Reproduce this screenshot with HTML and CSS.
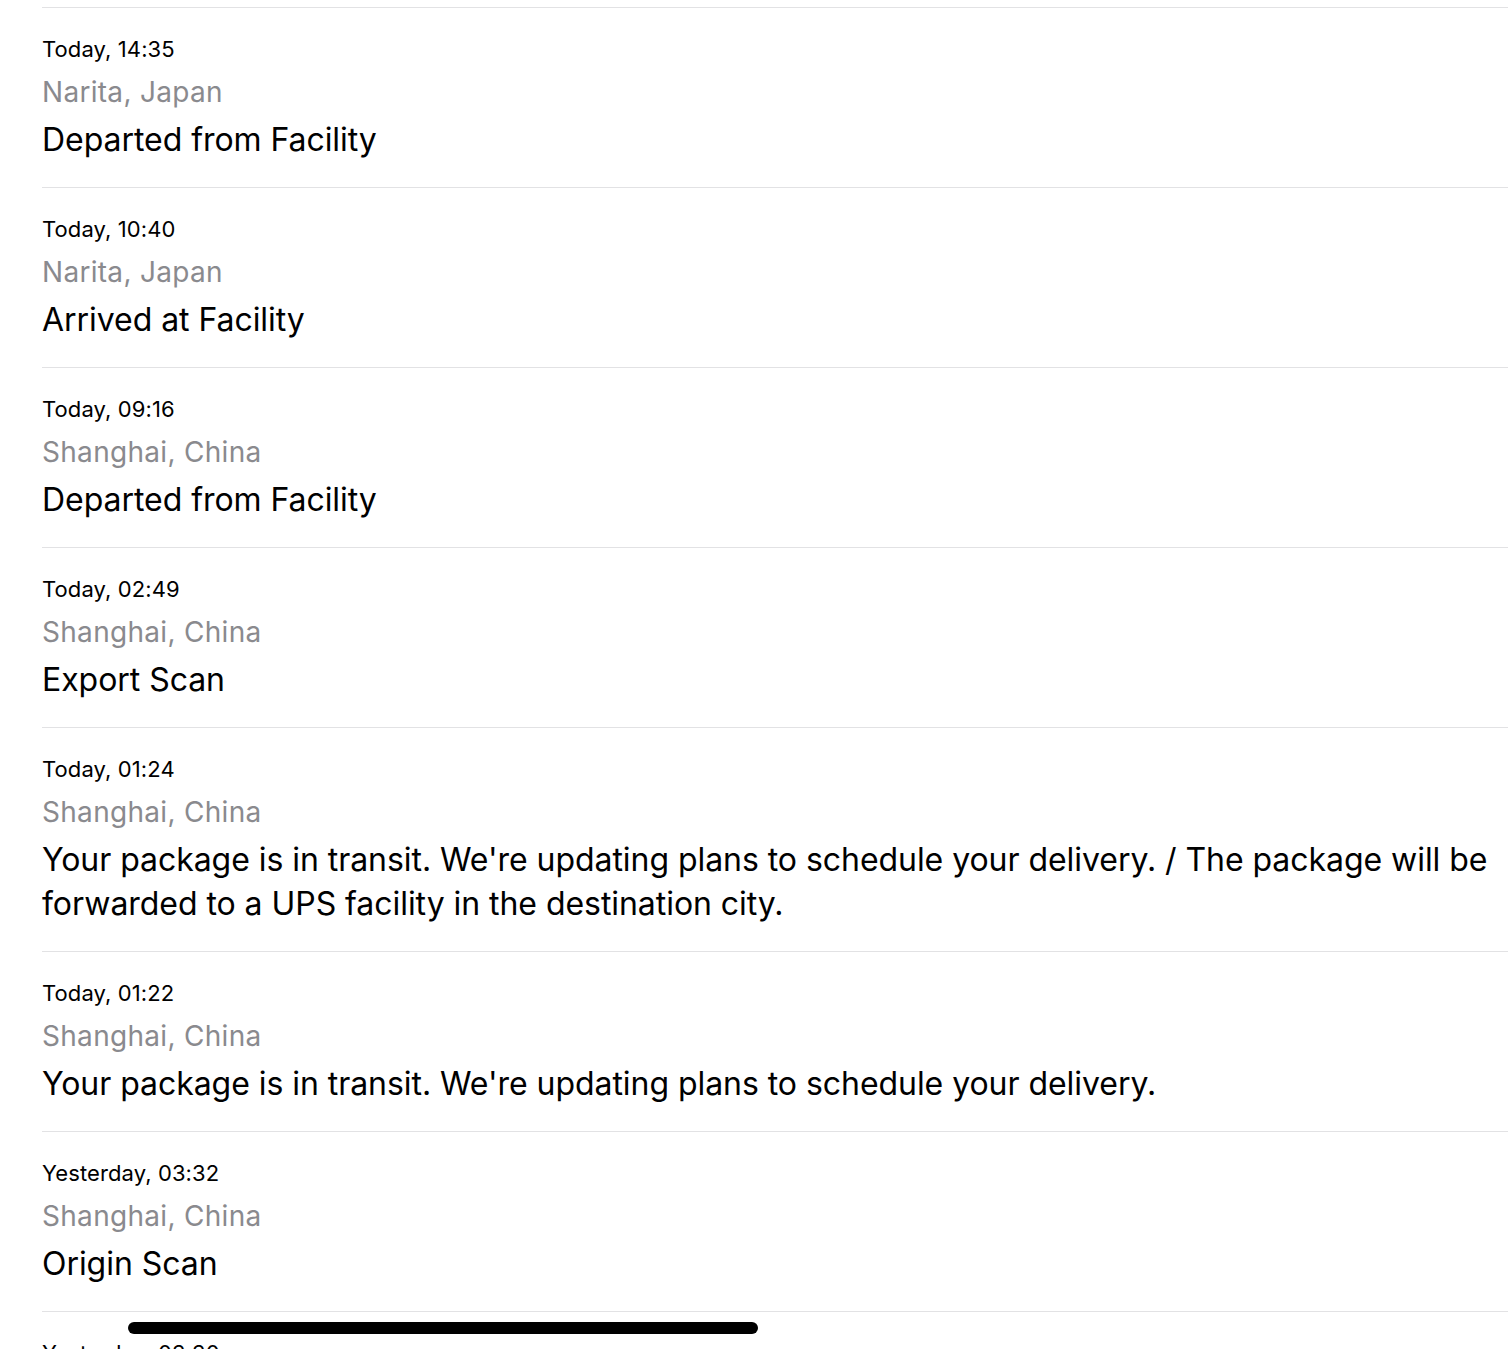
FILE: index.html
```html
<!DOCTYPE html>
<html lang="en">
<head>
<meta charset="utf-8">
<title>Tracking history</title>
<link rel="stylesheet" href="styles.css">
</head>
<body>
<main class="page">
  <ul class="events">
    <li class="event">
      <div class="event-time">Today, 14:35</div>
      <div class="event-place">Narita, Japan</div>
      <div class="event-status">Departed from Facility</div>
    </li>
    <li class="event">
      <div class="event-time">Today, 10:40</div>
      <div class="event-place">Narita, Japan</div>
      <div class="event-status">Arrived at Facility</div>
    </li>
    <li class="event">
      <div class="event-time">Today, 09:16</div>
      <div class="event-place">Shanghai, China</div>
      <div class="event-status">Departed from Facility</div>
    </li>
    <li class="event">
      <div class="event-time">Today, 02:49</div>
      <div class="event-place">Shanghai, China</div>
      <div class="event-status">Export Scan</div>
    </li>
    <li class="event">
      <div class="event-time">Today, 01:24</div>
      <div class="event-place">Shanghai, China</div>
      <div class="event-status">Your package is in transit. We're updating plans to schedule your delivery. / The package will be forwarded to a UPS facility in the destination city.</div>
    </li>
    <li class="event">
      <div class="event-time">Today, 01:22</div>
      <div class="event-place">Shanghai, China</div>
      <div class="event-status">Your package is in transit. We're updating plans to schedule your delivery.</div>
    </li>
    <li class="event">
      <div class="event-time">Yesterday, 03:32</div>
      <div class="event-place">Shanghai, China</div>
      <div class="event-status">Origin Scan</div>
    </li>
    <li class="event">
      <div class="event-time">Yesterday, 03:30</div>
      <div class="event-place">Shanghai, China</div>
      <div class="event-status">Origin Scan</div>
    </li>
  </ul>
</main>
<div class="home-indicator"></div>
</body>
</html>
```
FILE: styles.css
```css
html, body {
  margin: 0;
  padding: 0;
  background: #ffffff;
  overflow: hidden;
}

body {
  font-family: Inter, "Noto Sans", "Liberation Sans", sans-serif;
  color: #000000;
  -webkit-font-smoothing: antialiased;
}

.page {
  padding-top: 7px;
  padding-left: 42px;
}

.events {
  list-style: none;
  margin: 0;
  padding: 0;
}

.event {
  border-top: 1px solid #e2e2e4;
  padding: 27px 0 25px 0;
}

.event-time {
  font-size: 22px;
  line-height: 28px;
  letter-spacing: 0.1px;
}

.event-place {
  margin-top: 9px;
  font-size: 28px;
  line-height: 40px;
  letter-spacing: 0.3px;
  color: #8a8a8e;
}

.event-status {
  margin-top: 6px;
  font-size: 32px;
  line-height: 44px;
  letter-spacing: -0.05px;
}

.home-indicator {
  position: fixed;
  left: 128px;
  top: 1322px;
  width: 630px;
  height: 12px;
  border-radius: 6px;
  background: #000000;
}
```
